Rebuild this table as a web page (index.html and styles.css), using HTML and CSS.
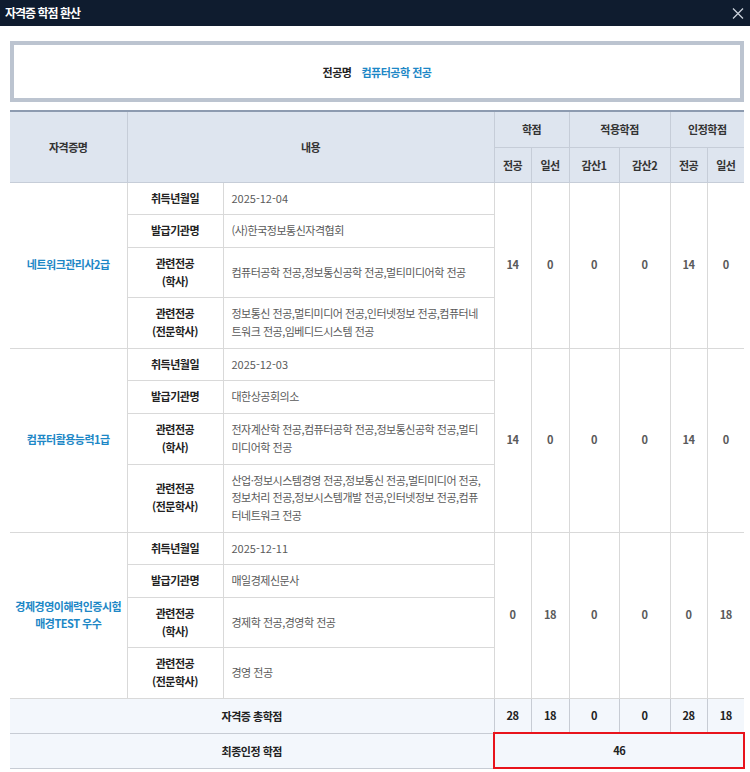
FILE: index.html
```html
<!DOCTYPE html>
<html lang="ko">
<head>
<meta charset="utf-8">
<title>자격증 학점 환산</title>
<link rel="stylesheet" href="styles.css">
</head>
<body>
<div class="modal">
  <header class="modal-head">
    <h1 class="modal-title">자격증 학점 환산</h1>
    <button class="close-btn" type="button" aria-label="닫기">
      <svg width="12" height="11" viewBox="0 0 12 11"><path d="M1 0.5 L11 10.5 M11 0.5 L1 10.5" stroke="#c9d0da" stroke-width="1.3" fill="none"/></svg>
    </button>
  </header>
  <div class="modal-body">
    <div class="major-box">
      <span class="major-label">전공명</span>
      <span class="major-name">컴퓨터공학 전공</span>
    </div>
    <table class="credit-table">
      <colgroup>
        <col class="c-name"><col class="c-label"><col class="c-value">
        <col class="c-n37"><col class="c-n38"><col class="c-n50"><col class="c-n51"><col class="c-n37"><col class="c-n37">
      </colgroup>
      <thead>
        <tr class="head-1">
          <th rowspan="2">자격증명</th>
          <th rowspan="2" colspan="2">내용</th>
          <th colspan="2">학점</th>
          <th colspan="2">적용학점</th>
          <th colspan="2">인정학점</th>
        </tr>
        <tr class="head-2">
          <th>전공</th><th>일선</th><th>감산1</th><th>감산2</th><th>전공</th><th>일선</th>
        </tr>
      </thead>
      <tbody>
        <tr class="grp-start">
          <td rowspan="4" class="cert-name">네트워크관리사2급</td>
          <th class="label">취득년월일</th>
          <td class="value date">2025-12-04</td>
          <td rowspan="4" class="num">14</td>
          <td rowspan="4" class="num">0</td>
          <td rowspan="4" class="num">0</td>
          <td rowspan="4" class="num">0</td>
          <td rowspan="4" class="num">14</td>
          <td rowspan="4" class="num">0</td>
        </tr>
        <tr><th class="label">발급기관명</th><td class="value">(사)한국정보통신자격협회</td></tr>
        <tr><th class="label">관련전공<br>(학사)</th><td class="value">컴퓨터공학 전공,정보통신공학 전공,멀티미디어학 전공</td></tr>
        <tr><th class="label">관련전공<br>(전문학사)</th><td class="value">정보통신 전공,멀티미디어 전공,인터넷정보 전공,컴퓨터네트워크 전공,임베디드시스템 전공</td></tr>

        <tr class="grp-start">
          <td rowspan="4" class="cert-name">컴퓨터활용능력1급</td>
          <th class="label">취득년월일</th>
          <td class="value date">2025-12-03</td>
          <td rowspan="4" class="num">14</td>
          <td rowspan="4" class="num">0</td>
          <td rowspan="4" class="num">0</td>
          <td rowspan="4" class="num">0</td>
          <td rowspan="4" class="num">14</td>
          <td rowspan="4" class="num">0</td>
        </tr>
        <tr><th class="label">발급기관명</th><td class="value">대한상공회의소</td></tr>
        <tr><th class="label">관련전공<br>(학사)</th><td class="value">전자계산학 전공,컴퓨터공학 전공,정보통신공학 전공,멀티미디어학 전공</td></tr>
        <tr><th class="label">관련전공<br>(전문학사)</th><td class="value">산업·정보시스템경영 전공,정보통신 전공,멀티미디어 전공,정보처리 전공,정보시스템개발 전공,인터넷정보 전공,컴퓨터네트워크 전공</td></tr>

        <tr class="grp-start">
          <td rowspan="4" class="cert-name">경제경영이해력인증시험<br>매경TEST 우수</td>
          <th class="label">취득년월일</th>
          <td class="value date">2025-12-11</td>
          <td rowspan="4" class="num">0</td>
          <td rowspan="4" class="num">18</td>
          <td rowspan="4" class="num">0</td>
          <td rowspan="4" class="num">0</td>
          <td rowspan="4" class="num">0</td>
          <td rowspan="4" class="num">18</td>
        </tr>
        <tr><th class="label">발급기관명</th><td class="value">매일경제신문사</td></tr>
        <tr><th class="label">관련전공<br>(학사)</th><td class="value">경제학 전공,경영학 전공</td></tr>
        <tr><th class="label">관련전공<br>(전문학사)</th><td class="value">경영 전공</td></tr>
      </tbody>
      <tfoot>
        <tr class="sum-row">
          <th colspan="3">자격증 총학점</th>
          <td>28</td><td>18</td><td>0</td><td>0</td><td>28</td><td>18</td>
        </tr>
        <tr class="sum-row">
          <th colspan="3">최종인정 학점</th>
          <td colspan="6" class="final">46</td>
        </tr>
      </tfoot>
    </table>
  </div>
</div>
</body>
</html>
```
FILE: styles.css
```css
* { box-sizing: border-box; }

html, body {
  margin: 0;
  padding: 0;
  background: #ffffff;
}

body {
  font-family: "Noto Sans CJK KR", "Noto Sans", sans-serif;
  font-size: 11px;
  color: #555555;
  width: 750px;
}

.modal-head {
  height: 26px;
  background: #0f1c2f;
  display: flex;
  align-items: center;
  justify-content: space-between;
  padding: 0 6px 0 5px;
}

.modal-title {
  margin: 0;
  font-size: 12px;
  font-weight: 700;
  color: #ffffff;
  letter-spacing: -1px;
  line-height: 26px;
}

.close-btn {
  border: 0;
  background: transparent;
  padding: 0;
  margin: 0;
  width: 12px;
  height: 11px;
  display: flex;
}

.modal-body {
  padding: 15px 6px 0 10px;
}

.major-box {
  height: 61px;
  border: 4px solid #bcc4d0;
  background: #ffffff;
  display: flex;
  align-items: center;
  justify-content: center;
  gap: 10px;
  font-size: 11px;
  font-weight: 700;
  letter-spacing: -0.5px;
  padding-top: 1px;
}

.major-label { color: #222222; }
.major-name { color: #1d87c6; }

.credit-table {
  margin-top: 8px;
  width: 734px;
  table-layout: fixed;
  border-collapse: collapse;
  border-top: 2px solid #8d9bb0;
  letter-spacing: -0.5px;
}

.c-name { width: 117px; }
.c-label { width: 96px; }
.c-value { width: 271px; }
.c-n37 { width: 37px; }
.c-n38 { width: 38px; }
.c-n50 { width: 50px; }
.c-n51 { width: 51px; }

.credit-table thead th {
  background: #dee5ef;
  color: #333333;
  font-weight: 700;
  text-align: center;
  vertical-align: middle;
  border: 1px solid #c6cdd8;
  padding: 0;
}

.credit-table thead th:first-child { border-left: 0; }
.credit-table thead tr.head-1 th:last-child,
.credit-table thead tr.head-2 th:last-child { border-right: 0; }

.head-1 { height: 36px; }
.head-2 { height: 35px; }

.credit-table td,
.credit-table tbody th {
  border: 1px solid #d9d9d9;
  vertical-align: middle;
  line-height: 17.7px;
}

.credit-table tbody tr > :first-child { border-left: 0; }
.credit-table tbody tr > :last-child { border-right: 0; }

.cert-name {
  color: #1d87c6;
  font-weight: 700;
  text-align: center;
  padding: 0 2px;
}

.label {
  color: #222222;
  font-weight: 700;
  text-align: center;
  padding: 7px 4px;
}

.value {
  color: #5a5a5a;
  text-align: left;
  padding: 7px 8px;
}

.value.date { letter-spacing: 0; }

.num {
  color: #5a5a5a;
  font-weight: 700;
  text-align: center;
  padding: 0;
}

.sum-row { height: 35px; }

.sum-row th,
.sum-row td {
  background: #f3f7fc;
  color: #222222;
  font-weight: 700;
  text-align: center;
  border: 1px solid #c7ccd4;
  padding: 0;
}

.sum-row > :first-child { border-left: 0; }
.sum-row > :last-child { border-right: 0; }

.sum-row td.final {
  outline: 2px solid #e8141c;
  outline-offset: -1px;
}
```
